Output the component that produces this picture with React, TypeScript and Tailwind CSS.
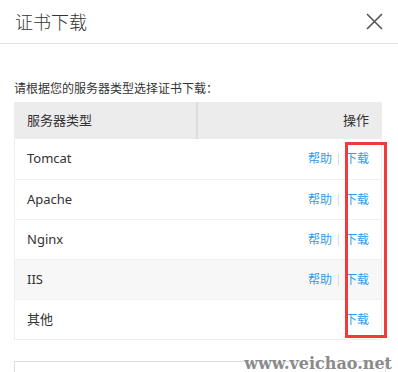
import React from "react";

const rows = [
  { name: "Tomcat", help: true, bg: "bg-white" },
  { name: "Apache", help: true, bg: "bg-white" },
  { name: "Nginx", help: true, bg: "bg-white" },
  { name: "IIS", help: true, bg: "bg-[#f7f7f7]" },
  { name: "其他", help: false, bg: "bg-white" },
];

export default function App() {
  return (
    <div
      className="relative w-[398px] h-[372px] overflow-hidden bg-white text-[#333]"
      style={{ fontFamily: '"Noto Sans", "Noto Sans CJK SC", sans-serif' }}
    >
      <div className="flex h-[44px] items-center justify-between border-b border-[#e3e3e3] pl-[15px] pr-[15px]">
        <span className="text-[18px] leading-none text-[#333] font-light">证书下载</span>
        <svg width="17" height="17" viewBox="0 0 17 17">
          <path d="M1 1L16 16M16 1L1 16" stroke="#555" strokeWidth="1.6" />
        </svg>
      </div>
      <div className="px-[14px]">
        <div className="mt-[37px] text-[12px] leading-[16px] text-[#333]">请根据您的服务器类型选择证书下载：</div>
        <div className="mt-[5px] w-[368px] border-l border-r border-b border-[#eeeeee]">
          <div className="flex h-[37px] bg-[#ebeceb] text-[13px] text-[#333]">
            <div className="flex w-[183px] items-center border-r-2 border-[#dcdcdc] pl-[12px]">服务器类型</div>
            <div className="flex flex-1 items-center justify-end pr-[12px]">操作</div>
          </div>
          {rows.map((r, i) => (
            <div
              key={r.name}
              className={`flex h-[40px] items-center justify-between pl-[12px] pr-[12px] text-[13px] ${r.bg} ${i > 0 ? "border-t border-[#f0f0f0]" : ""}`}
            >
              <span>{r.name}</span>
              <span className="flex items-center text-[12px] text-[#2d9cf0]">
                {r.help && (
                  <>
                    <span>帮助</span>
                    <span className="mx-[6px] h-[12px] w-px bg-[#dddddd]" />
                  </>
                )}
                <span>下载</span>
              </span>
            </div>
          ))}
        </div>
        <div className="mt-[21px] h-[30px] w-[372px] border border-[#dddddd]" />
      </div>
      <div className="absolute left-[345px] top-[142px] h-[196px] w-[42px] border-[3px] border-[#f23a3a]" />
      <div
        className="absolute right-[6px] top-[355px] text-[16px] leading-[17px] font-bold text-[#8a8a8a]"
        style={{ fontFamily: '"DejaVu Serif", "Liberation Serif", serif', textShadow: "0 0 2px #fff" }}
      >
        www.veichao.net
      </div>
    </div>
  );
}
